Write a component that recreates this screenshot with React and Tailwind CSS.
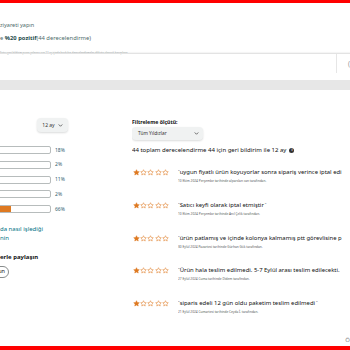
import React from 'react'

const BARS = [18, 2, 11, 2, 66]

const REVIEWS = [
  { title: 'uygun fiyatlı ürün koyuyorlar sonra sipariş verince iptal edi', close: false, date: '10 Ekim 2024 Perşembe tarihinde alparslan can tarafından.' },
  { title: 'Satıcı keyfi olarak iptal etmiştir', close: true, date: '10 Ekim 2024 Perşembe tarihinde Anıl Çelik tarafından.' },
  { title: 'ürün patlamış ve içinde kolonya kalmamış ptt görevlisine p', close: false, date: '30 Eylül 2024 Pazartesi tarihinde Gürhan Gök tarafından.' },
  { title: 'Ürün hala teslim edilmedi. 5-7 Eylül arası teslim edilecekti.', close: false, date: '27 Eylül 2024 Cuma tarihinde Didem tarafından.' },
  { title: 'siparis edeli 12 gün oldu paketim teslim edilmedi', close: true, date: '21 Eylül 2024 Cumartesi tarihinde Ceyda İ. tarafından.' },
]

function Star({ filled }) {
  return (
    <svg width="7" height="7" viewBox="0 0 24 24">
      <path
        d="M12 2.5l2.9 6.1 6.6.8-4.9 4.6 1.3 6.6L12 17.3l-5.9 3.3 1.3-6.6-4.9-4.6 6.6-.8z"
        fill={filled ? '#de7921' : 'none'}
        stroke="#de7921"
        strokeWidth="1.8"
        strokeLinejoin="round"
      />
    </svg>
  )
}

function Chevron() {
  return (
    <svg width="5" height="5" viewBox="0 0 10 10">
      <path d="M2 3.5l3 3 3-3" fill="none" stroke="#333" strokeWidth="1.4" strokeLinecap="round" />
    </svg>
  )
}

export default function App() {
  return (
    <div className="w-[350px] h-[350px] overflow-hidden bg-white flex flex-col font-['Noto_Sans',sans-serif] text-[#0f1111]">
      <div className="h-[3px] bg-[#ff0000] shrink-0" />

      {/* top summary */}
      <div className="h-[50px] shrink-0 pt-[18px] flex flex-col">
        <p className="text-[5.5px] leading-[8px] text-[#4d6b6b] whitespace-nowrap">ziyareti yapın</p>
        <p className="mt-[5px] text-[5.8px] leading-[8px] text-[#4d6b6b] whitespace-nowrap">
          e <span className="font-bold text-[#1d4a4a]">%20 pozitif</span>(44 derecelendirme)
        </p>
        <p className="mt-[9px] text-[2.6px] leading-[4px] text-[#9aa5a5] whitespace-nowrap">
          Satıcı geri bildirim puanı yalnızca son 12 ay içinde bırakılan derecelendirmeler dikkate alınarak hesaplanır
        </p>
      </div>

      <div className="h-[27px] shrink-0 border-t border-[#e3e3e3] shadow-[0_-1px_1px_rgba(0,0,0,0.04)] flex justify-end">
        <div className="w-[14px] h-[19px] border-l border-[#e6e6e6] flex items-center justify-end">
          <span className="text-[7px] text-[#999] leading-none">(</span>
        </div>
      </div>
      <div className="h-[10px] bg-[#e7e7e7] shrink-0" />

      {/* main */}
      <div className="flex flex-1">
        {/* left column */}
        <div className="w-[132px] shrink-0 pt-[28px]">
          <div className="ml-[37px] w-[31px] h-[14px] rounded-[4px] bg-[#f0f2f2] shadow-[0_1px_2px_rgba(15,17,17,0.15)] flex items-center justify-center gap-[3px]">
            <span className="text-[5px] leading-none text-[#333]">12 ay</span>
            <Chevron />
          </div>
          <div className="mt-[14px] flex flex-col gap-[6.8px]">
            {BARS.map((p, i) => (
              <div key={i} className="flex items-center">
                <div className="-ml-[66px] w-[117px] h-[8px] rounded-[2px] border border-[#b7bcbc] bg-white overflow-hidden">
                  <div className="h-full bg-[#de7921]" style={{ width: `${p}%` }} />
                </div>
                <span className="ml-[4px] text-[5px] leading-none text-[#2f5d6e]">{p}%</span>
              </div>
            ))}
          </div>
          <p className="mt-[12px] text-[6px] leading-[9px] text-[#007185] whitespace-nowrap">da nasıl işlediği</p>
          <p className="text-[6px] leading-[8px] text-[#007185] whitespace-nowrap">nin</p>
          <p className="mt-[11px] text-[6px] leading-[8px] font-bold whitespace-nowrap">erle paylaşın</p>
          <div className="mt-[5px] -ml-[20px] w-[29px] h-[12px] rounded-full border border-[#888c8c] flex items-center justify-end pr-[3px]">
            <span className="text-[5.5px] leading-none">un</span>
          </div>
        </div>

        {/* right column */}
        <div className="flex-1 min-w-0 overflow-hidden pt-[29px]">
          <p className="text-[5.2px] leading-[7px] font-bold whitespace-nowrap">Filtreleme ölçütü:</p>
          <div className="mt-[1px] w-[71px] h-[13px] rounded-[4px] bg-[#f0f2f2] shadow-[0_1px_2px_rgba(15,17,17,0.15)] flex items-center justify-between pl-[6px] pr-[4px]">
            <span className="text-[4.8px] leading-none text-[#333]">Tüm Yıldızlar</span>
            <Chevron />
          </div>
          <div className="mt-[6px] flex items-center gap-[3px] whitespace-nowrap">
            <span className="text-[6px] leading-[8px]">44 toplam derecelendirme 44 için geri bildirim ile 12 ay</span>
            <span className="w-[5px] h-[5px] rounded-full bg-[#333] text-white text-[3.5px] leading-none flex items-center justify-center font-bold">i</span>
          </div>
          <div className="mt-[14px] flex flex-col">
            {REVIEWS.map((r, i) => (
              <div key={i} className="h-[32.8px] flex">
                <div className="w-[46px] shrink-0 flex gap-[0.2px] pt-[1px] pl-[1px]">
                  {[0, 1, 2, 3, 4].map(s => <Star key={s} filled={s === 0} />)}
                </div>
                <div className="min-w-0 overflow-hidden whitespace-nowrap">
                  <p className="text-[5.9px] leading-[8px] text-[#0f1111]">
                    <span className="text-[4px] align-top text-[#555]">"</span>
                    {r.title}
                    {r.close && <span className="text-[4px] align-top text-[#555]"> "</span>}
                  </p>
                  <p className="mt-[3px] text-[3.2px] leading-[5px] text-[#565959]">{r.date}</p>
                </div>
              </div>
            ))}
          </div>
          <div className="flex justify-end mt-[5px]">
            <span className="text-[6px] leading-none text-[#888]">Ö</span>
          </div>
        </div>
      </div>

      <div className="h-[4px] bg-[#ff0000] shrink-0" />
    </div>
  )
}
